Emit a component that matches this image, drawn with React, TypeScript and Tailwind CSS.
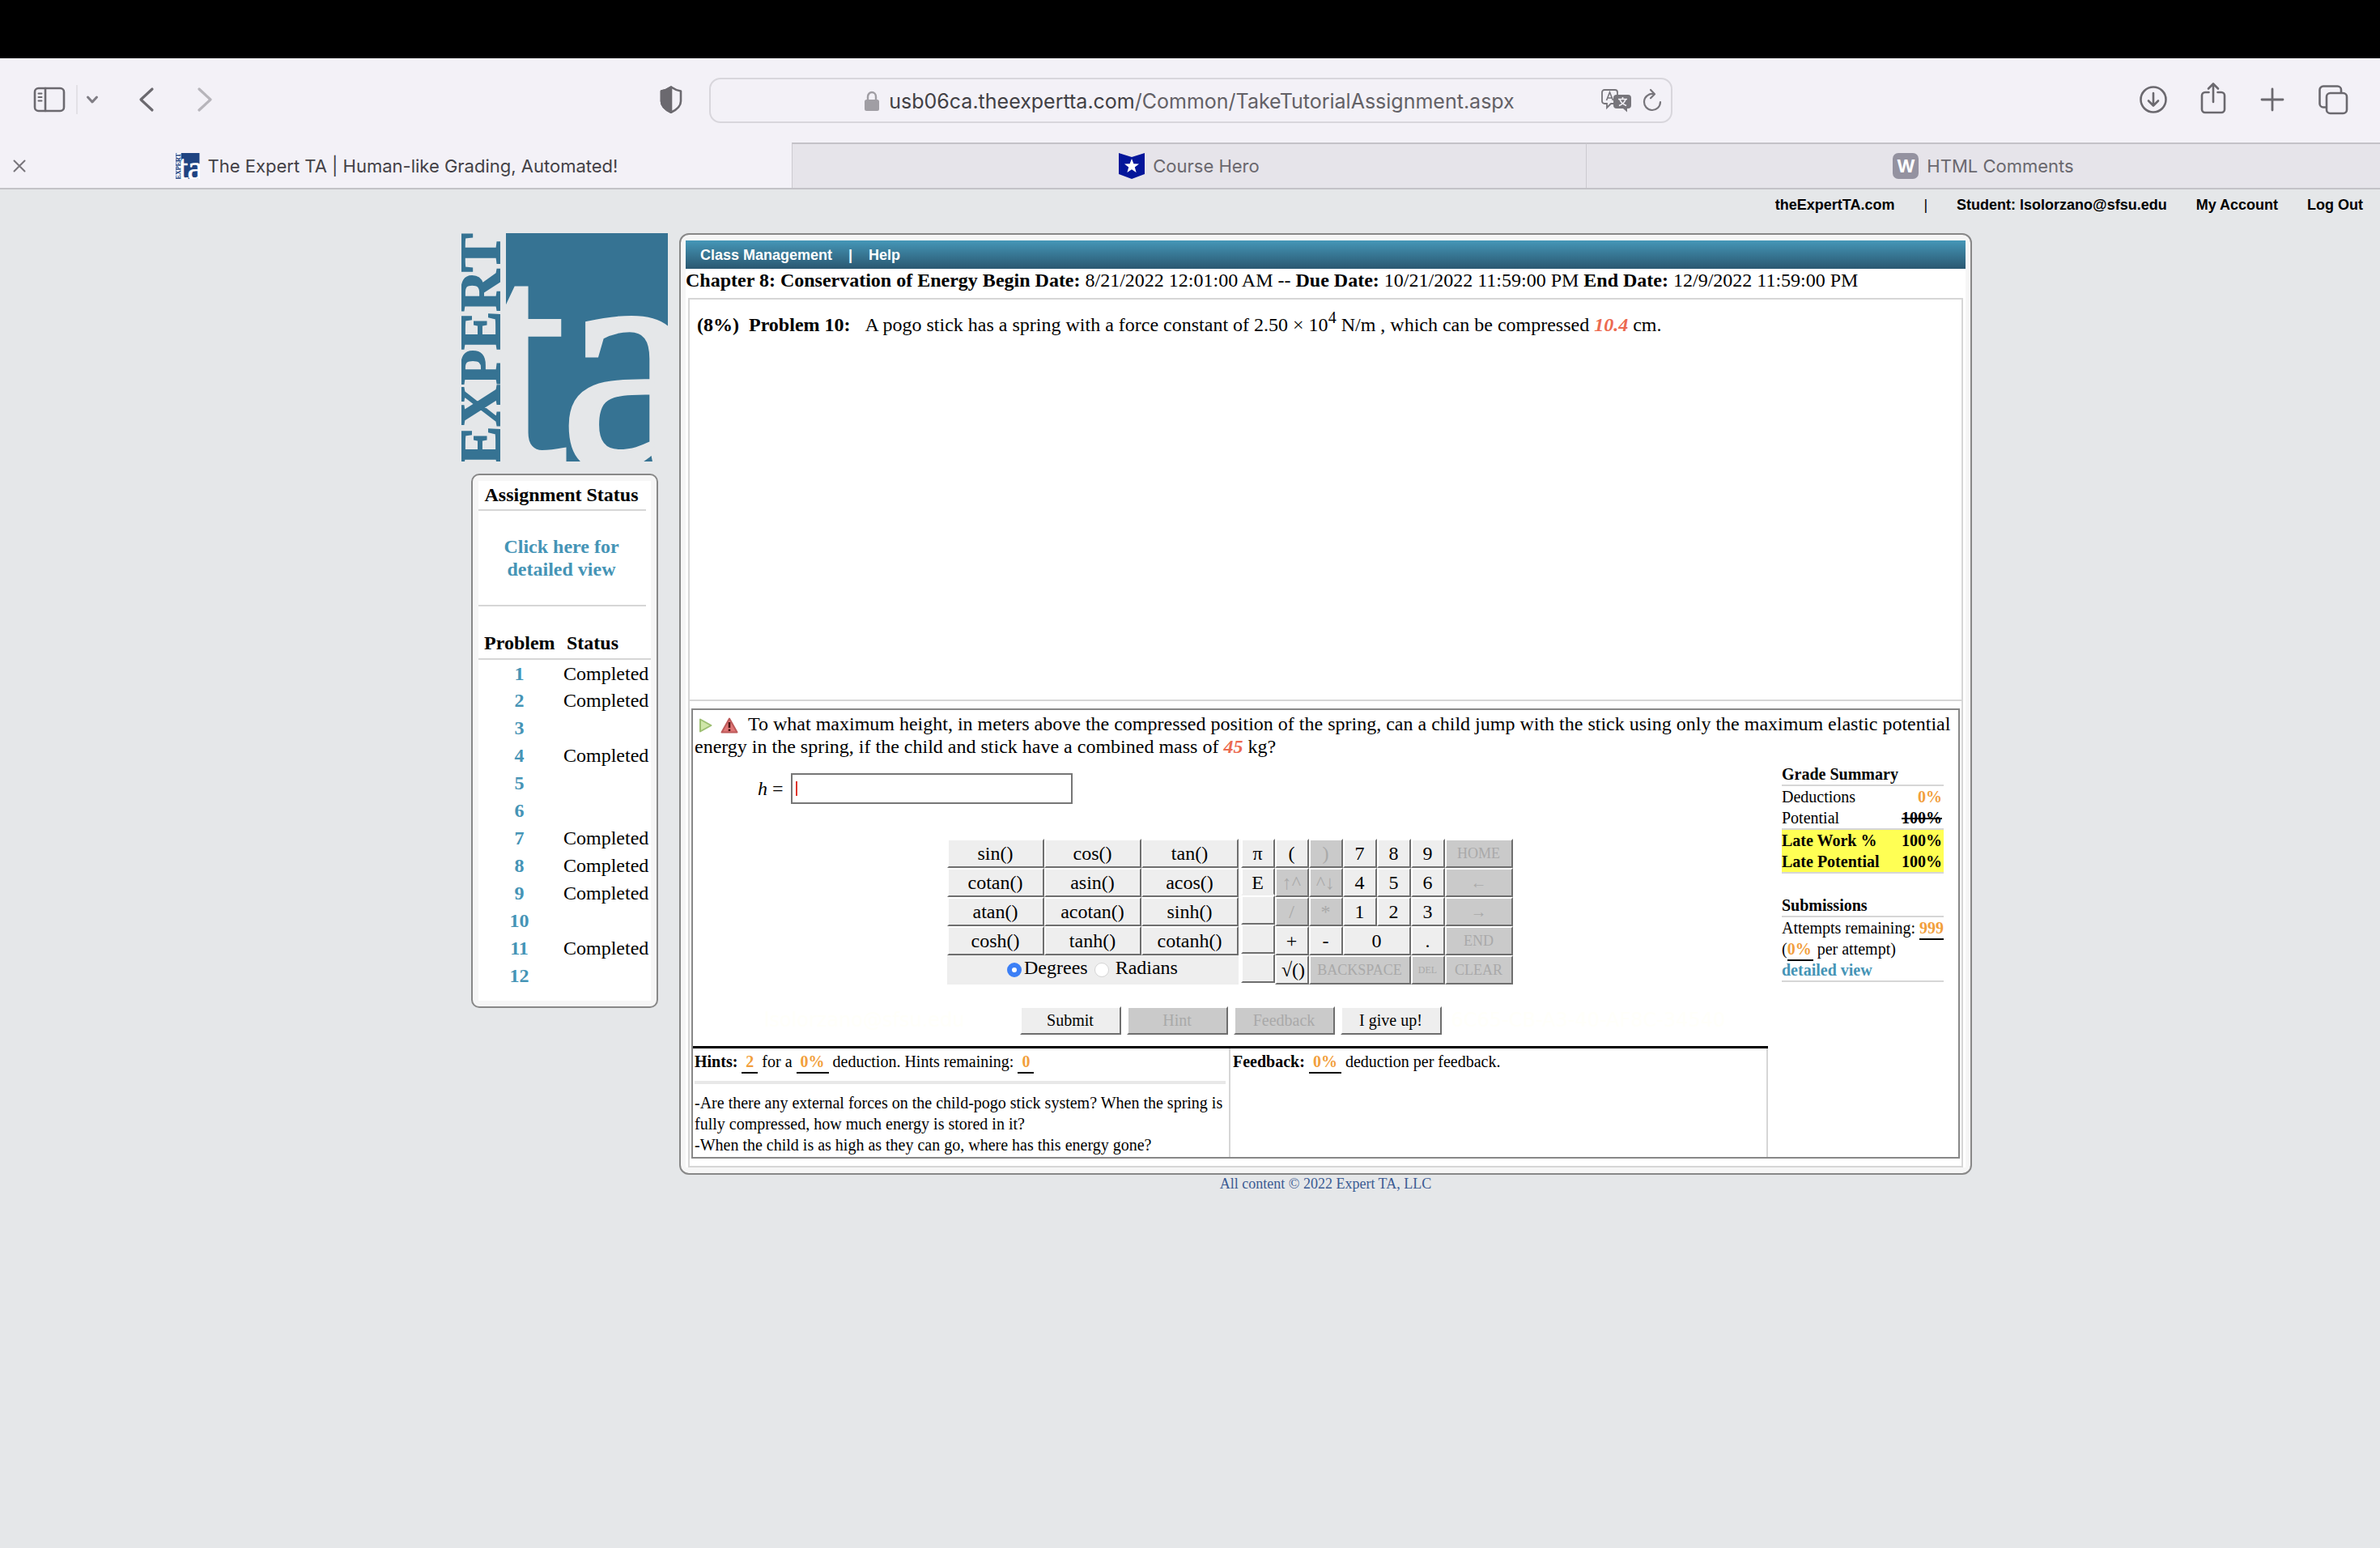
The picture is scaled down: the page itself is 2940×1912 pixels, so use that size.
import React from "react";

const SERIF = "font-['Liberation_Serif',serif]";
const SANS = "font-['Liberation_Sans',sans-serif]";
const UI = "font-[Inter,sans-serif]";

function Toolbar() {
  return (
    <div className="flex h-[104px] items-center bg-[#f3f1f7] pb-[2px] pl-[40px] pr-[38px] text-[#6b696f]">
      <div className="flex flex-1 items-center">
        <button aria-label="Show sidebar">
          <svg width="42" height="34" viewBox="0 0 42 34" fill="none" stroke="currentColor" strokeWidth="2.6" strokeLinecap="round">
            <rect x="3" y="3" width="36" height="28" rx="4.5" />
            <path d="M16 3v28" />
            <path d="M7.5 9.5h4M7.5 14h4M7.5 18.500h4" strokeWidth="2" />
          </svg>
        </button>
        <span className="ml-[12px] h-9 w-[2px] bg-[#e3e1e6]" />
        <button aria-label="Tab groups" className="ml-[7px]">
          <svg width="22" height="14" viewBox="0 0 22 14" fill="none" stroke="#7f7d84" strokeWidth="3" strokeLinecap="round" strokeLinejoin="round">
            <path d="M5.500 4l5.500 6 5.500-6" />
          </svg>
        </button>
        <button aria-label="Back" className="ml-[45px]">
          <svg width="24" height="34" viewBox="0 0 24 34" fill="none" stroke="currentColor" strokeWidth="3.200" strokeLinecap="round" strokeLinejoin="round">
            <path d="M18 4L4 17l14 13" />
          </svg>
        </button>
        <button aria-label="Forward" className="ml-[46px] text-[#b7b5bb]">
          <svg width="24" height="34" viewBox="0 0 24 34" fill="none" stroke="currentColor" strokeWidth="3.200" strokeLinecap="round" strokeLinejoin="round">
            <path d="M6 4l14 13L6 30" />
          </svg>
        </button>
        <button aria-label="Privacy report" className="ml-auto mr-[31px]">
          <svg width="32" height="36" viewBox="0 0 32 36" fill="none" stroke="currentColor" strokeWidth="2.600" strokeLinejoin="round">
            <path d="M16 2.500c4 2.800 7.500 4.200 12 5V20c0 6-5 10.500-12 13.800C9 30.500 4 26 4 20V7.500c4.500-.8 8-2.200 12-5z" />
            <path d="M16 2.500v31.300C9 30.500 4 26 4 20V7.500c4.500-.8 8-2.200 12-5z" fill="currentColor" />
          </svg>
        </button>
      </div>
      <div className="mt-[2px] flex h-14 w-[1190px] items-center rounded-[14px] border-2 border-[#d8d6dc] pr-[10px]">
        <div className={`${UI} ml-[82px] flex flex-1 items-center justify-center pt-[2px] text-[25px] leading-8 text-[#636166]`}>
          <svg width="20" height="26" viewBox="0 0 20 26" className="mr-[11px]">
            <rect x="1" y="11" width="18" height="14" rx="2.500" fill="#a09ea4" />
            <path d="M5 12V7.500a5 5.500 0 0110 0V12" fill="none" stroke="#a09ea4" strokeWidth="2.400" />
          </svg>
          <span className="whitespace-nowrap">
            <span className="text-[#414044]">usb06ca.theexpertta.com</span>/Common/TakeTutorialAssignment.aspx
          </span>
        </div>
        <button aria-label="Translate">
          <svg width="38" height="30" viewBox="0 0 38 30">
            <path d="M4 2h13a3 3 0 013 3v11a3 3 0 01-3 3h-5l-5 5v-5H4a3 3 0 01-3-3V5a3 3 0 013-3z" fill="none" stroke="#77757b" strokeWidth="1.800" />
            <path d="M6.500 15l4-10 4 10M7.800 12h5.400" fill="none" stroke="#77757b" strokeWidth="1.600" />
            <path d="M19 8h14a4 4 0 014 4v9a4 4 0 01-4 4h-1v4.500L27 25h-8a4 4 0 01-4-4v-9a4 4 0 014-4z" fill="#77757b" />
            <path d="M21 13.500h11M26.500 11v2.500M23 14c1.500 4 4 6 8 7.500M30 14c-1.500 4-4 6-8 7.500" fill="none" stroke="#f3f1f7" strokeWidth="1.700" />
          </svg>
        </button>
        <button aria-label="Reload" className="ml-[12px]">
          <svg width="26" height="30" viewBox="0 0 26 30" fill="none" stroke="#77757b" strokeWidth="2.200" strokeLinecap="round" strokeLinejoin="round">
            <path d="M23 17a10 10 0 11-8.500-9.900" />
            <path d="M11 2l5 5.200-5 5" />
          </svg>
        </button>
      </div>
      <div className="flex flex-1 items-center justify-end gap-[38px]">
        <button aria-label="Downloads">
          <svg width="36" height="36" viewBox="0 0 36 36" fill="none" stroke="currentColor" strokeWidth="2.600" strokeLinecap="round" strokeLinejoin="round">
            <circle cx="18" cy="18" r="15.500" />
            <path d="M18 10v15M12 19.500l6 6 6-6" />
          </svg>
        </button>
        <button aria-label="Share">
          <svg width="36" height="42" viewBox="0 0 36 42" fill="none" stroke="currentColor" strokeWidth="2.600" strokeLinecap="round" strokeLinejoin="round" className="-mt-1">
            <path d="M12.500 14H8a4 4 0 00-4 4v17a4 4 0 004 4h20a4 4 0 004-4V18a4 4 0 00-4-4h-4.500" />
            <path d="M18 26V4M12 9.500L18 3.500l6 6" />
          </svg>
        </button>
        <button aria-label="New tab">
          <svg width="34" height="34" viewBox="0 0 34 34" fill="none" stroke="currentColor" strokeWidth="2.800" strokeLinecap="round">
            <path d="M17 4v26M4 17h26" />
          </svg>
        </button>
        <button aria-label="Tab overview">
          <svg width="40" height="38" viewBox="0 0 40 38" fill="none" stroke="currentColor" strokeWidth="2.600" strokeLinejoin="round">
            <rect x="12" y="11" width="25" height="25" rx="4.500" />
            <path d="M12 28.500H8A4.500 4.500 0 013.500 24V7A4.500 4.500 0 018 2.500h17.500A4.500 4.500 0 0130 7v4" />
          </svg>
        </button>
      </div>
    </div>
  );
}

function LogoArt({ size, ink, paper }: { size: string; ink: string; paper: string }) {
  return (
    <svg viewBox="0 0 255 282" className={size} role="img" aria-label="Expert TA" overflow="hidden">
      <rect x="55" y="0" width="200" height="282" fill={ink} />
      <text x="21" y="287" fontFamily="Liberation Serif, serif" fontSize="388" fill={paper} stroke={paper} strokeWidth="6">
        t
      </text>
      <text x="122" y="287" fontFamily="Liberation Serif, serif" fontSize="388" fill={paper} stroke={paper} strokeWidth="6">
        a
      </text>
      <text
        transform="translate(47 286) rotate(-90)"
        fontFamily="Liberation Serif, serif"
        fontWeight="700"
        fontSize="71"
        fill={ink}
        stroke={ink}
        strokeWidth="2"
      >
        EXPERT
      </text>
    </svg>
  );
}

function Tabs() {
  const idle =
    "flex flex-1 items-center justify-center border-l border-t-2 border-l-[#cccad0] border-t-[#c4c2c8] bg-[#e6e4ea] text-[#6a686e]";
  return (
    <div className={`${UI} flex h-[58px] border-b-2 border-[#c3c2c7] bg-[#f3f1f7] text-[22px] leading-7`}>
      <button className="flex w-[978px] items-center px-4 pt-[2px] text-[#434146]">
        <svg width="16" height="16" viewBox="0 0 16 16" fill="none" stroke="#77757b" strokeWidth="2" strokeLinecap="round">
          <path d="M1.500 1.500l13 13M14.500 1.500l-13 13" />
        </svg>
        <span className="flex flex-1 items-center justify-center gap-[10px] pr-[14px]">
          <span className="bg-white">
            <LogoArt size="h-8 w-[30px]" ink="#1f4482" paper="#ffffff" />
          </span>
          The Expert TA | Human-like Grading, Automated!
        </span>
      </button>
      <button className={`${idle} gap-[10px]`}>
        <svg width="32" height="32" viewBox="0 0 32 32">
          <path d="M0 0l16 5L32 0v26l-16 6-16-6z" fill="#04169a" />
          <path d="M16 7l2.400 6.200 6.600.3-5.200 4.100 1.800 6.400-5.600-3.700-5.600 3.700 1.800-6.400L7 13.500l6.600-.3z" fill="#fff" />
        </svg>
        Course Hero
      </button>
      <button className={`${idle} gap-[10px]`}>
        <span className="flex size-8 items-center justify-center rounded-[7px] bg-[#9492a0] text-[22px] font-bold text-white">W</span>
        HTML Comments
      </button>
    </div>
  );
}

const problems: [number, string][] = [
  [1, "Completed"],
  [2, "Completed"],
  [3, ""],
  [4, "Completed"],
  [5, ""],
  [6, ""],
  [7, "Completed"],
  [8, "Completed"],
  [9, "Completed"],
  [10, ""],
  [11, "Completed"],
  [12, ""],
];

function StatusPanel() {
  return (
    <section className="ml-3 mt-[15px] w-[231px] rounded-[10px] border-2 border-[#888] bg-[#f6f6f6] px-[7px] py-[7px]">
      <div className="bg-white pb-[14px]">
        <h2 className="mr-[6px] border-b-2 border-[#d6d6d6] pb-1 pr-[2px] pt-[3px] text-center leading-7 font-bold">Assignment Status</h2>
        <div className="mr-[6px] border-b-2 border-[#d6d6d6] pb-[30px] pr-[2px] pt-[30px] text-center leading-7 font-bold text-[#4594b6]">
          <a href="#details">
            Click here for
            <br />
            detailed view
          </a>
        </div>
        <table className="mt-[31px] w-full border-collapse leading-7">
          <thead>
            <tr className="h-[34px] border-b-2 border-[#d6d6d6] text-left align-top font-bold">
              <th className="w-[103px] p-0 pl-[7px]">Problem</th>
              <th className="p-0 pl-[6px]">Status</th>
            </tr>
          </thead>
          <tbody>
            {problems.map(([n, status]) => (
              <tr key={n} className="h-[34px]">
                <td className="p-0 pr-[2px] text-center font-bold text-[#4594b6]">
                  <a href="#problem">{n}</a>
                </td>
                <td className="p-0 pl-[2px]">{status}</td>
              </tr>
            ))}
          </tbody>
        </table>
      </div>
    </section>
  );
}

function Key({ label, off, className = "" }: { label: string; off?: boolean; className?: string }) {
  return (
    <button
      disabled={off}
      aria-label={label || "blank"}
      className={`h-9 overflow-hidden border-2 border-b-[#6e6e6e] border-l-white border-r-[#6e6e6e] border-t-white text-center whitespace-nowrap ${
        off ? "bg-[#cacaca] text-[#a9a9a9]" : "bg-[#eee] text-black"
      } ${className}`}
    >
      {label}
    </button>
  );
}

const functions = ["sin()", "cos()", "tan()", "cotan()", "asin()", "acos()", "atan()", "acotan()", "sinh()", "cosh()", "tanh()", "cotanh()"];

function Keypad() {
  return (
    <div className="flex justify-center gap-[3px] pr-[2px] text-[24px] leading-8">
      <div className="grid w-[360px] grid-cols-3 content-start">
        {functions.map((f) => (
          <Key key={f} label={f} />
        ))}
        <div className="col-span-3 flex h-9 justify-center gap-2 bg-[#eee] pb-[6px] leading-[30px]">
          <label className="flex items-center gap-[3px]">
            <input
              type="radio"
              name="angle"
              defaultChecked
              className="mt-[6px] size-[18px] appearance-none rounded-full border border-[#bdbdbd] bg-white checked:border-[6px] checked:border-[#3b7ff6]"
            />
            Degrees
          </label>
          <label className="flex items-center gap-2">
            <input
              type="radio"
              name="angle"
              className="mt-[6px] size-[18px] appearance-none rounded-full border border-[#d4d4d4] bg-white checked:border-[6px] checked:border-[#3b7ff6]"
            />
            Radians
          </label>
        </div>
      </div>
      <div className="flex">
        <div className="flex w-[42px] flex-col">
          <Key label="π" />
          <Key label="E" className="h-[34px] border-b-[#eee]" />
          <Key label="" />
          <Key label="" />
          <Key label="" />
        </div>
        <div className="grid grid-cols-[42px_42px_42px_42px_42px_84px] content-start">
          <Key label="(" />
          <Key label=")" off />
          <Key label="7" />
          <Key label="8" />
          <Key label="9" />
          <Key label="HOME" off className="text-[18px]" />
          <Key label="↑^" off />
          <Key label="^↓" off />
          <Key label="4" />
          <Key label="5" />
          <Key label="6" />
          <Key label="←" off className="text-[20px]" />
          <Key label="/" off />
          <Key label="*" off />
          <Key label="1" />
          <Key label="2" />
          <Key label="3" />
          <Key label="→" off className="text-[20px]" />
          <Key label="+" />
          <Key label="-" />
          <Key label="0" className="col-span-2" />
          <Key label="." />
          <Key label="END" off className="text-[18px]" />
          <Key label="√()" className="pl-1" />
          <Key label="BACKSPACE" off className="col-span-3 text-[18px]" />
          <Key label="DEL" off className="text-[12px]" />
          <Key label="CLEAR" off className="text-[18px]" />
        </div>
      </div>
    </div>
  );
}

function Mark({ children, className = "px-[5px]" }: { children: React.ReactNode; className?: string }) {
  return (
    <span className={`inline-block h-[28px] border-b-2 border-black font-bold text-[#f29f3d] ${className}`}>{children}</span>
  );
}

function GradeSummary() {
  const line = "border-b-2 border-[#d6d6d6]";
  return (
    <aside className="mr-[18px] w-[200px] pt-[7px] text-[20px] leading-[26px]">
      <table className="w-full border-separate border-spacing-0">
        <thead>
          <tr>
            <th colSpan={2} className={`${line} p-0 text-left`}>
              Grade Summary
            </th>
          </tr>
        </thead>
        <tbody>
          <tr>
            <td className="p-0">Deductions</td>
            <td className="p-0 pr-[2px] text-right font-bold text-[#f29f3d]">0%</td>
          </tr>
          <tr>
            <td className={`${line} p-0`}>Potential</td>
            <td className={`${line} p-0 pr-[2px] text-right font-bold line-through`}>100%</td>
          </tr>
          <tr className="bg-[#ffff54] font-bold">
            <td className="p-0">Late Work %</td>
            <td className="p-0 pr-[2px] text-right">100%</td>
          </tr>
          <tr className="bg-[#ffff54] font-bold">
            <td className={`${line} p-0`}>Late Potential</td>
            <td className={`${line} p-0 pr-[2px] text-right`}>100%</td>
          </tr>
        </tbody>
      </table>
      <h3 className={`${line} mt-[26px] font-bold`}>Submissions</h3>
      <p className="h-[26px] whitespace-nowrap">
        Attempts remaining: <Mark className="px-0">999</Mark>
      </p>
      <p className="h-[26px]">
        (<Mark className="pr-[2px]">0%</Mark> per attempt)
      </p>
      <p className={`${line} font-bold text-[#4594b6]`}>
        <a href="#submissions">detailed view</a>
      </p>
    </aside>
  );
}

function Question() {
  const action = "h-[35px] w-[125px] border-2 border-b-[#6e6e6e] border-l-white border-r-[#6e6e6e] border-t-white text-[20px] leading-6";
  const stamp = "font-['DejaVu_Sans',sans-serif] text-[24px] text-[#fffffa]";
  return (
    <section className="mx-[2px] mt-[9px] border-2 border-[#888] bg-white">
      <p className="px-[2px] pt-[3px] leading-7">
        <svg width="18" height="20" viewBox="0 0 18 20" className="ml-[5px] inline-block align-[-4px]">
          <path d="M2 2.500v15L15.500 10z" fill="#cfe6a8" stroke="#9dbf72" strokeWidth="2" strokeLinejoin="round" />
        </svg>
        <svg width="22" height="20" viewBox="0 0 22 20" className="ml-[9px] mr-[12px] inline-block align-[-4px]">
          <path d="M11 1.500L20.500 18.500h-19z" fill="#e07676" stroke="#bd5a5a" strokeWidth="2" strokeLinejoin="round" />
          <path d="M11 6v7M11 14.500v2.500" stroke="#4a1414" strokeWidth="2.600" />
        </svg>
        To what maximum height, in meters above the compressed position of the spring, can a child jump with the stick using only the
        maximum elastic potential energy in the spring, if the child and stick have a combined mass of{" "}
        <b className="italic text-[#ec6a50]">45</b> kg?
      </p>
      <div className="flex">
        <div className="flex flex-1 flex-col">
          <div className="ml-[80px] mt-[19px] flex items-center gap-[9px]">
            <label htmlFor="answer">
              <i>h</i> =
            </label>
            <div className="flex h-[38px] w-[348px] items-center border-2 border-[#767676] bg-white pl-1">
              <span className="h-[18px] w-[2px] bg-[#e0352b]" />
              <input id="answer" type="text" className="w-full bg-transparent outline-none" />
            </div>
          </div>
          <div className="mt-[43px]">
            <Keypad />
          </div>
          <div className="mt-[26px] grid grid-cols-[1fr_auto_1fr] items-center gap-x-[12px]">
            <span className={`${stamp} mr-[56px] text-right`}>lsolorzano@sfsu.edu</span>
            <div className="flex gap-[7px]">
              <button className={`${action} bg-[#eee]`}>Submit</button>
              <button disabled className={`${action} bg-[#cacaca] text-[#a9a9a9]`}>
                Hint
              </button>
              <button disabled className={`${action} bg-[#cacaca] text-[#a9a9a9]`}>
                Feedback
              </button>
              <button className={`${action} bg-[#eee]`}>I give up!</button>
            </div>
            <span className={`${stamp} whitespace-nowrap`}>6C65-CB-A3-40-AF8C-34540</span>
          </div>
          <div className="mt-[14px] grid flex-1 grid-cols-2 border-t-[3px] border-black text-[20px] leading-[26px]">
            <div className="border-r-2 border-[#d6d6d6] pb-[2px] pl-[2px]">
              <p className="h-[38px] pt-[3px]">
                <b>Hints:</b>{" "}
                <Mark>2</Mark> for a <Mark>0%</Mark> deduction. Hints remaining: <Mark>0</Mark>
              </p>
              <div className="mr-[4px] mt-[2px] h-1 bg-[#e8e8e8]" />
              <p className="mt-[10px]">
                -Are there any external forces on the child-pogo stick system? When the spring is fully compressed, how much energy is
                stored in it?
                <br />
                -When the child is as high as they can go, where has this energy gone?
              </p>
            </div>
            <div className="border-r-2 border-[#d6d6d6] pl-[3px] pt-[3px]">
              <b>Feedback:</b> <Mark>0%</Mark> deduction per feedback.
            </div>
          </div>
        </div>
        <div className="pl-[17px]">
          <GradeSummary />
        </div>
      </div>
    </section>
  );
}

export default function App() {
  return (
    <div className={`${SERIF} min-h-screen bg-[#e5e7e9] text-[24px] text-black`}>
      <div className="h-[72px] bg-black" />
      <Toolbar />
      <Tabs />
      <nav className={`${SANS} flex h-[38px] items-center justify-end pr-[21px] text-[18px] font-bold leading-6`}>
        <a href="#home">theExpertTA.com</a>
        <span className="mx-9 font-normal">|</span>
        <span>Student: lsolorzano@sfsu.edu</span>
        <a href="#account" className="ml-9">
          My Account
        </a>
        <a href="#logout" className="ml-9">
          Log Out
        </a>
      </nav>
      <div className="mx-auto mt-4 flex max-w-[1932px] items-start pl-[66px]">
        <div className="mr-[14px] w-[255px]">
          <LogoArt size="h-[282px] w-[255px]" ink="#367393" paper="#e5e7e9" />
          <StatusPanel />
        </div>
        <main className="flex-1">
          <div className="rounded-[12px] border-2 border-[#888] bg-[#f6f6f6] px-[6px] py-[7px]">
            <div className="bg-white">
              <nav className={`${SANS} flex h-[35px] items-center bg-linear-to-b from-[#4597b8] to-[#2a5871] pl-[18px] text-[18px] font-bold leading-6 text-white`}>
                <a href="#classes">Class Management</a>
                <span className="mx-5">|</span>
                <a href="#help">Help</a>
              </nav>
              <h1 className="leading-7">
                <b>Chapter 8: Conservation of Energy Begin Date:</b> 8/21/2022 12:01:00 AM -- <b>Due Date:</b> 10/21/2022 11:59:00 PM{" "}
                <b>End Date:</b> 12/9/2022 11:59:00 PM
              </h1>
              <div className="mx-[3px] mt-2 border-2 border-[#d6d6d6] pb-[9px]">
                <p className="min-h-[496px] border-b-2 border-[#d6d6d6] pl-[9px] pt-[17px] leading-7">
                  <b>(8%)</b>
                  <b className="ml-3">Problem 10:</b>
                  <span className="ml-[18px]">
                    A pogo stick has a spring with a force constant of 2.50 × 10<sup className="text-[20px]">4</sup> N/m , which can be
                    compressed <b className="italic text-[#ec6a50]">10.4</b> cm.
                  </span>
                </p>
                <Question />
              </div>
            </div>
          </div>
          <footer className="text-center text-[18px] leading-[22px] text-[#3b5b93]">All content © 2022 Expert TA, LLC</footer>
        </main>
      </div>
    </div>
  );
}
